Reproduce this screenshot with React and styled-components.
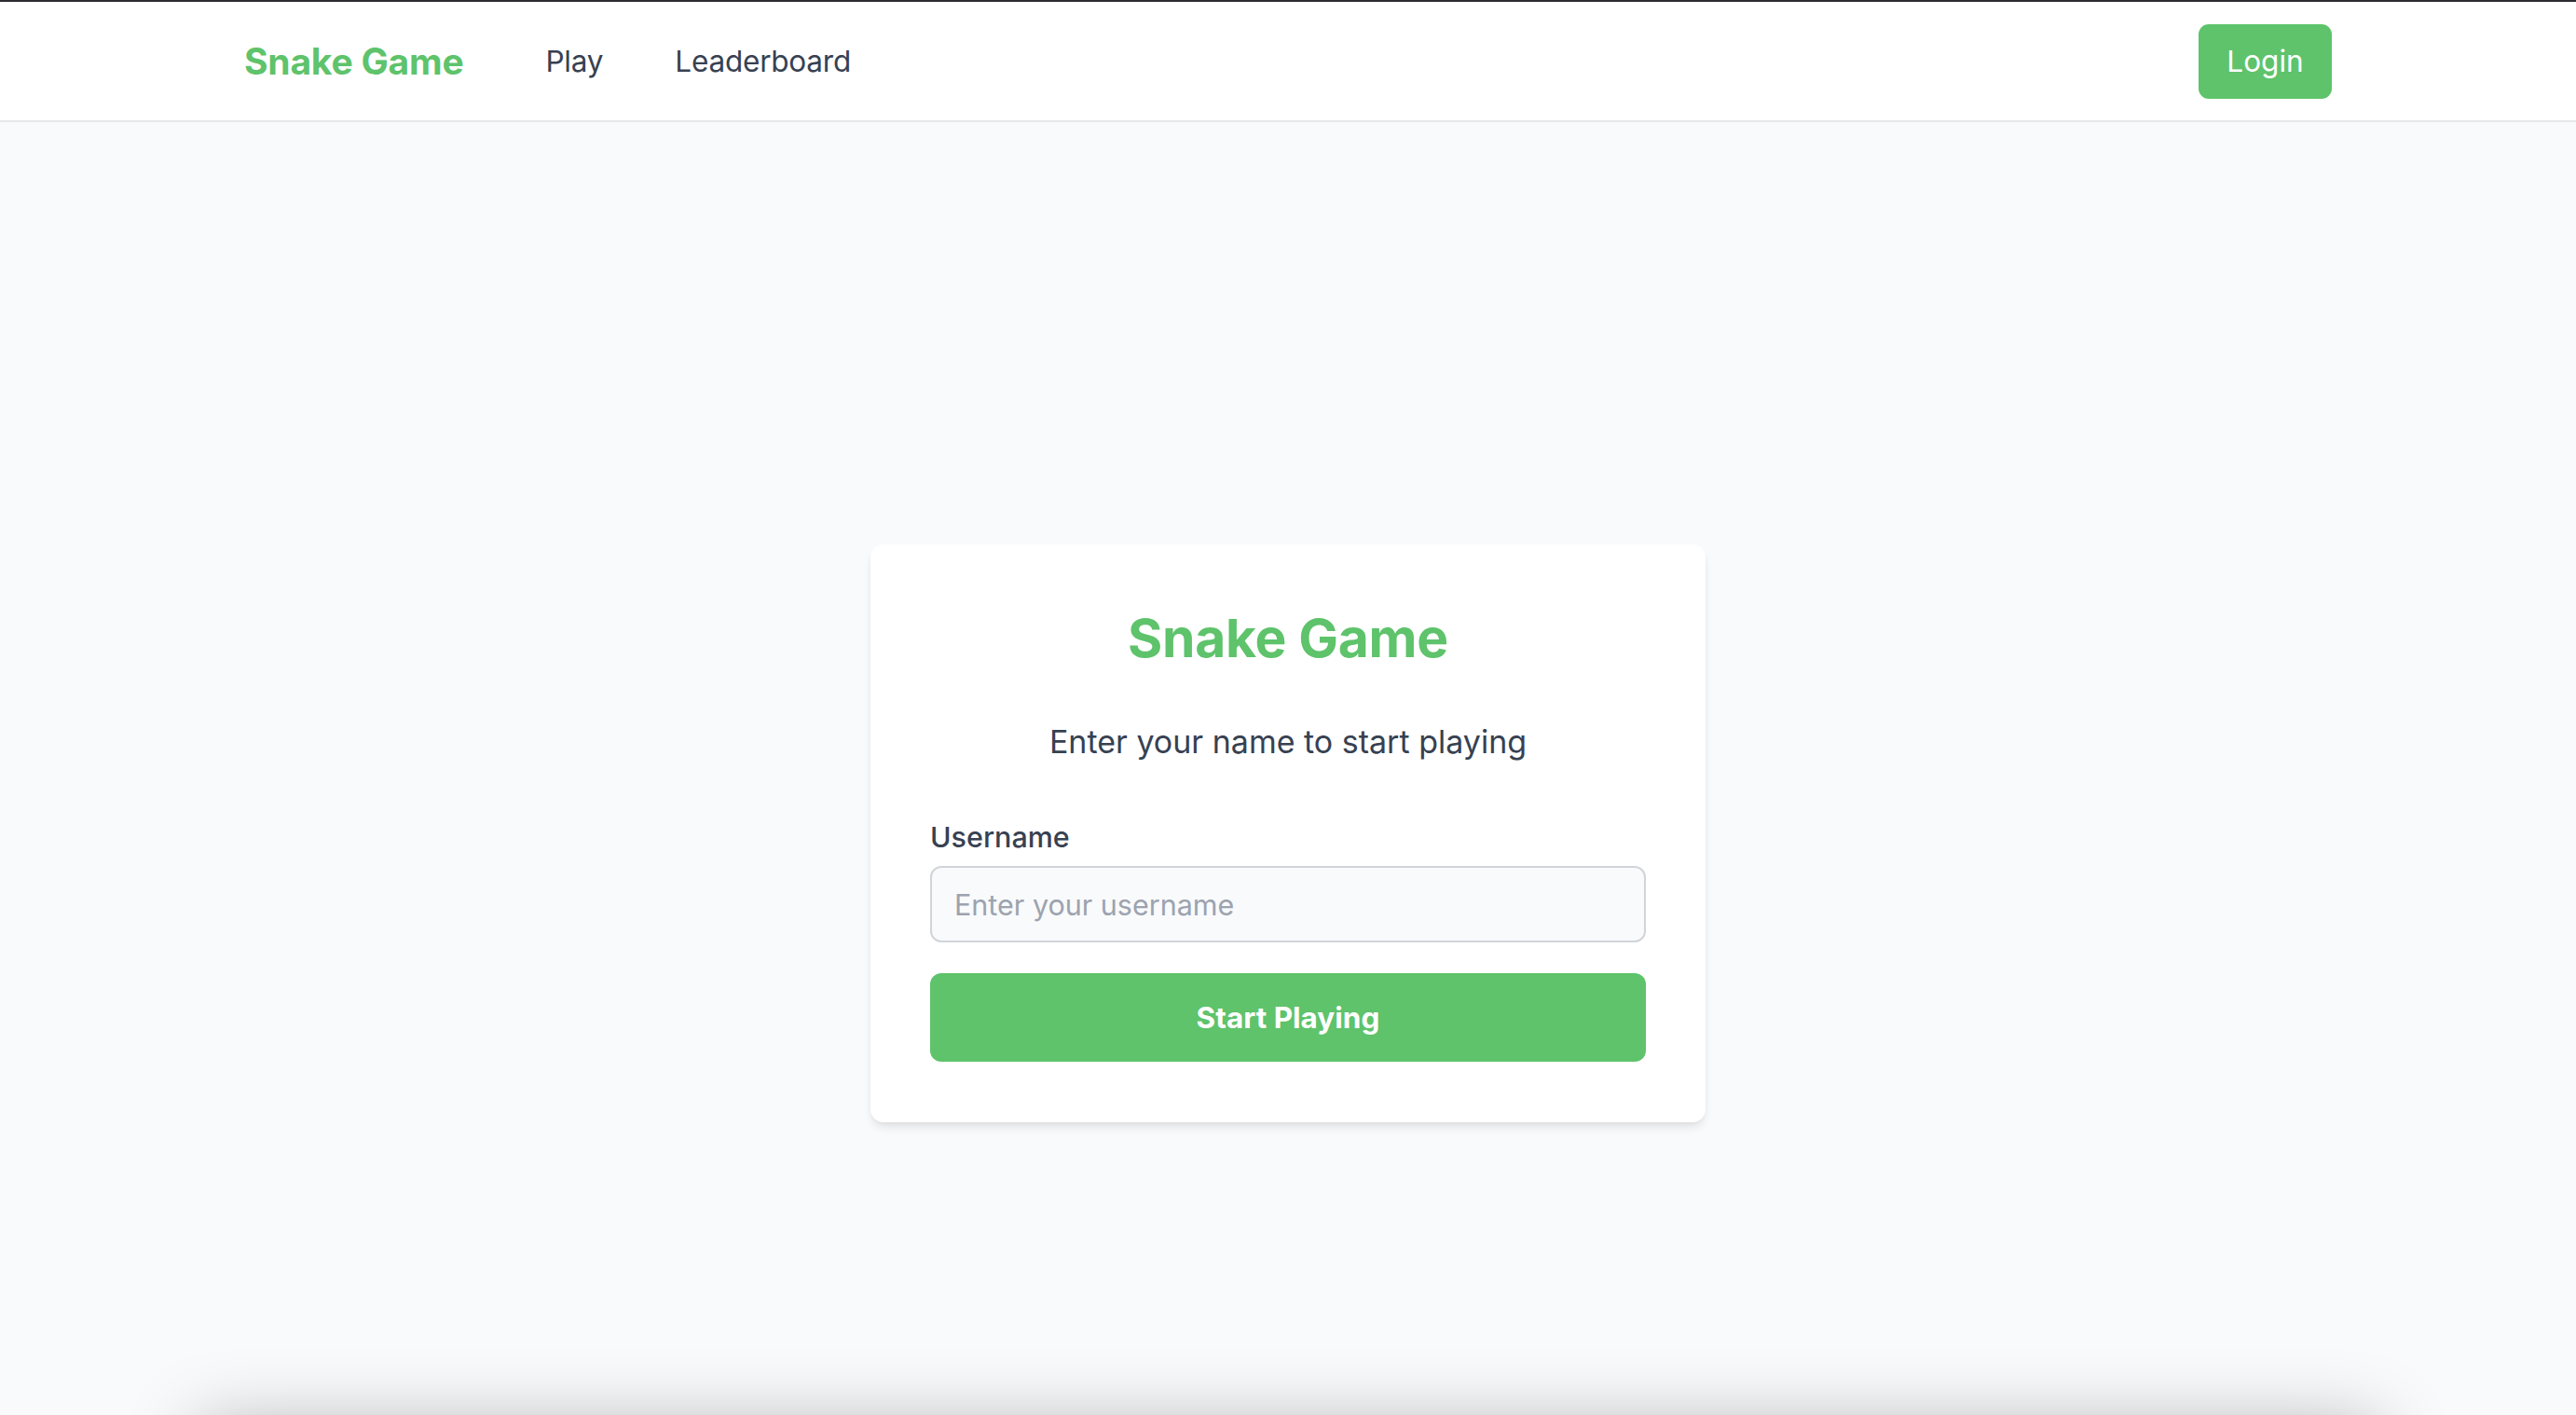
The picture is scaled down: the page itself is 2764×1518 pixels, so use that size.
import React from "react";
import styled, { createGlobalStyle } from "styled-components";

const GlobalStyle = createGlobalStyle`
  * { box-sizing: border-box; }
  html, body { margin: 0; padding: 0; }
  body {
    font-family: Inter, "Noto Sans", "Liberation Sans", sans-serif;
    background: #f9fafb;
    color: #374151;
  }
`;

const Page = styled.div`
  height: 100vh;
  overflow: hidden;
  background: #f9fafb;
`;

const Header = styled.header`
  background: #ffffff;
  border-top: 2px solid #2b2b30;
  border-bottom: 2px solid #e5e7eb;
`;

const NavInner = styled.nav`
  max-width: 2240px;
  margin: 0 auto;
  height: 127px;
  display: flex;
  align-items: center;
`;

const Brand = styled.a`
  font-size: 39px;
  font-weight: 700;
  color: #5ec36b;
  text-decoration: none;
  letter-spacing: -0.2px;
  margin-right: 88px;
`;

const Links = styled.div`
  display: flex;
  align-items: center;
  gap: 77px;
  flex: 1;
`;

const NavLink = styled.a`
  font-size: 31.5px;
  color: #374151;
  text-decoration: none;
  letter-spacing: -0.2px;
`;

const LoginButton = styled.button`
  font-family: inherit;
  font-size: 31.5px;
  color: #ffffff;
  background: #5ec36b;
  border: none;
  border-radius: 11px;
  height: 80px;
  width: 143px;
  padding: 0;
  cursor: pointer;
`;

const Main = styled.main`
  display: flex;
  justify-content: center;
  align-items: flex-start;
  padding: 453px 0 326px;
`;

const Card = styled.section`
  width: 896px;
  background: #ffffff;
  border-radius: 14px;
  padding: 64px 64px 65px;
  box-shadow: 0 7px 11px -2px rgba(0, 0, 0, 0.09), 0 3px 7px -3px rgba(0, 0, 0, 0.08);
  display: flex;
  flex-direction: column;
`;

const Title = styled.h1`
  margin: 0 0 50px;
  font-size: 57px;
  line-height: 74px;
  font-weight: 700;
  color: #5ec36b;
  text-align: center;
  letter-spacing: -0.3px;
`;

const Subtitle = styled.p`
  margin: 0 0 57px;
  font-size: 34px;
  line-height: 48px;
  color: #374151;
  text-align: center;
`;

const Label = styled.label`
  font-size: 30.5px;
  line-height: 42px;
  font-weight: 500;
  color: #374151;
  margin-bottom: 10px;
`;

const Input = styled.input`
  font-family: inherit;
  height: 82px;
  font-size: 30.5px;
  padding: 0 24px;
  border: 2px solid #d1d5db;
  border-radius: 12px;
  background: #f9fafb;
  color: #374151;
  margin-bottom: 33px;
  outline: none;
  &::placeholder { color: #9ca3af; }
`;

const StartButton = styled.button`
  font-family: inherit;
  height: 95px;
  font-size: 31.5px;
  font-weight: 700;
  color: #ffffff;
  background: #5ec36b;
  border: none;
  border-radius: 12px;
  cursor: pointer;
`;

const Footer = styled.footer`
  width: 2340px;
  height: 200px;
  margin: 0 auto;
  background: #ffffff;
  box-shadow: 0 0 80px rgba(0, 0, 0, 0.29);
`;

export default function App() {
  return (
    <>
      <GlobalStyle />
      <Page>
        <Header>
          <NavInner>
            <Brand href="#">Snake Game</Brand>
            <Links>
              <NavLink href="#">Play</NavLink>
              <NavLink href="#">Leaderboard</NavLink>
            </Links>
            <LoginButton>Login</LoginButton>
          </NavInner>
        </Header>
        <Main>
          <Card>
            <Title>Snake Game</Title>
            <Subtitle>Enter your name to start playing</Subtitle>
            <Label htmlFor="username">Username</Label>
            <Input id="username" placeholder="Enter your username" />
            <StartButton>Start Playing</StartButton>
          </Card>
        </Main>
        <Footer />
      </Page>
    </>
  );
}
